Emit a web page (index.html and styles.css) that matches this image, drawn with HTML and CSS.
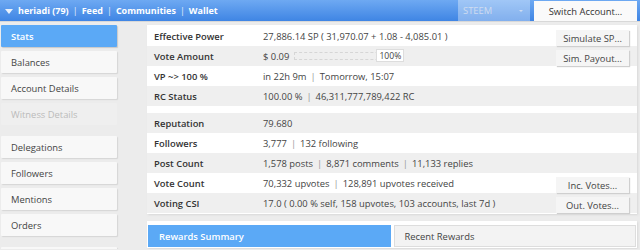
FILE: index.html
```html
<!DOCTYPE html>
<html>
<head>
<meta charset="utf-8">
<link rel="stylesheet" href="styles.css">
</head>
<body>
<div class="topbar">
  <div class="nav-links">
    <span class="caret"></span>
    <span class="link">heriadi (79)</span><span class="sep">|</span>
    <span class="link">Feed</span><span class="sep">|</span>
    <span class="link">Communities</span><span class="sep">|</span>
    <span class="link">Wallet</span>
  </div>
  <div class="top-right">
    <div class="chain-select"><span>STEEM</span><span class="chain-arrow"></span></div>
    <div class="switch-btn">Switch Account...</div>
  </div>
</div>
<div class="layout">
  <div class="sidenav">
    <div class="group">
      <div class="nav-item active">Stats</div>
      <div class="nav-item">Balances</div>
      <div class="nav-item">Account Details</div>
      <div class="nav-item disabled">Witness Details</div>
    </div>
    <div class="group">
      <div class="nav-item">Delegations</div>
      <div class="nav-item">Followers</div>
      <div class="nav-item">Mentions</div>
      <div class="nav-item">Orders</div>
    </div>
    <div class="group">
      <div class="nav-item"></div>
    </div>
  </div>
  <div class="main">
    <div class="card">
      <div class="table first">
        <div class="row">
          <div class="label">Effective Power</div>
          <div class="value">27,886.14 SP ( 31,970.07 + 1.08 - 4,085.01 )</div>
          <div class="btn">Simulate SP...</div>
        </div>
        <div class="row alt">
          <div class="label">Vote Amount</div>
          <div class="value vote">$ 0.09 <span class="slider"><span class="pct">100%</span></span></div>
          <div class="btn">Sim. Payout...</div>
        </div>
        <div class="row">
          <div class="label">VP ~&gt; 100 %</div>
          <div class="value">in 22h 9m <span class="bar">|</span> Tomorrow, 15:07</div>
        </div>
        <div class="row alt">
          <div class="label">RC Status</div>
          <div class="value">100.00 % <span class="bar">|</span> 46,311,777,789,422 RC</div>
        </div>
      </div>
      <div class="table second">
        <div class="row alt">
          <div class="label">Reputation</div>
          <div class="value">79.680</div>
        </div>
        <div class="row">
          <div class="label">Followers</div>
          <div class="value">3,777 <span class="bar">|</span> 132 following</div>
        </div>
        <div class="row alt">
          <div class="label">Post Count</div>
          <div class="value">1,578 posts <span class="bar">|</span> 8,871 comments <span class="bar">|</span> 11,133 replies</div>
        </div>
        <div class="row">
          <div class="label">Vote Count</div>
          <div class="value">70,332 upvotes <span class="bar">|</span> 128,891 upvotes received</div>
          <div class="btn">Inc. Votes...</div>
        </div>
        <div class="row alt">
          <div class="label">Voting CSI</div>
          <div class="value">17.0 ( 0.00 % self, 158 upvotes, 103 accounts, last 7d )</div>
          <div class="btn">Out. Votes...</div>
        </div>
      </div>
    </div>
    <div class="tabs">
      <div class="tab active">Rewards Summary</div>
      <div class="tab">Recent Rewards</div>
    </div>
  </div>
</div>
</body>
</html>
```

FILE: styles.css
```css
* { box-sizing: border-box; }
html, body { margin: 0; padding: 0; }
body {
  width: 640px;
  height: 250px;
  overflow: hidden;
  background: #ececec;
  font-family: "Open Sans", "Noto Sans", sans-serif;
  font-size: 9.4px;
  color: #333;
}
.topbar {
  height: 22px;
  display: flex;
  justify-content: space-between;
  align-items: stretch;
  background: linear-gradient(#6ea9f2, #3f85e4);
  border-bottom: 1px solid #d8d8d8;
}
.nav-links {
  display: flex;
  align-items: center;
  padding-left: 5px;
  color: #fff;
  font-weight: 700;
  font-size: 9px;
}
.caret {
  width: 0; height: 0;
  border-left: 4px solid transparent;
  border-right: 4px solid transparent;
  border-top: 5px solid #e8f0fb;
  margin: 1px 5px 0 0;
}
.sep { margin: 0 4px; font-weight: 400; color: #e2ecfa; }
.top-right { display: flex; align-items: stretch; padding-right: 3px; }
.chain-select {
  width: 72px;
  background: rgba(255,255,255,0.35);
  color: #cfdcf0;
  display: flex;
  align-items: center;
  justify-content: space-between;
  padding: 0 7px 0 5px;
}
.chain-arrow {
  width: 0; height: 0;
  border-left: 2px solid transparent;
  border-right: 2px solid transparent;
  border-top: 2px solid #cfdcf0;
}
.switch-btn {
  width: 103px;
  margin-left: 4px;
  margin-top: 1px;
  background: #fafafa;
  color: #333;
  display: flex;
  align-items: center;
  justify-content: center;
}
.layout {
  display: flex;
  gap: 30px;
  padding: 3px 3px 0 1px;
  height: 227px;
  overflow: hidden;
}
.sidenav { width: 116px; flex: none; display: flex; flex-direction: column; gap: 11px; }
.group { display: flex; flex-direction: column; gap: 4px; }
.nav-item {
  height: 22px;
  flex: none;
  background: #f8f8f8;
  box-shadow: 1px 1px 1px #d6d6d6;
  border-radius: 1px;
  padding-left: 10px;
  display: flex;
  align-items: center;
  color: #444;
}
.nav-item.active { background: #5ba9f6; color: #fff; font-weight: 600; box-shadow: 1px 1px 1px #c9c9c9; }
.nav-item.disabled { background: #efefef; color: #bbb; box-shadow: none; }
.main { flex: 1; display: flex; flex-direction: column; }
.card {
  background: #fff;
  box-shadow: 1px 1px 2px #d8d8d8;
  padding: 1px 0 1px 0;
}
.table.second { margin-top: 7px; }
.row {
  height: 20px;
  display: flex;
  align-items: center;
  background: #fff;
}
.row.alt { background: #efefef; }
.label { width: 116px; padding-left: 7px; font-weight: 600; color: #333; flex: none; }
.value { flex: 1; color: #444; white-space: nowrap; display: flex; align-items: center; }
.bar { color: #999; margin: 0 4px; }
.btn {
  width: 73px;
  height: 16px;
  margin-right: 8px;
  background: #f5f5f5;
  box-shadow: 1px 1px 1px #cfcfcf;
  display: flex;
  align-items: center;
  justify-content: center;
  color: #444;
  flex: none;
  position: relative;
  top: 2px;
}
.slider {
  width: 110px;
  height: 8px;
  margin-left: 5px;
  border: 1px dashed #d6d6d6;
  position: relative;
}
.pct {
  position: absolute;
  right: -1px;
  top: -4px;
  width: 28px;
  height: 13px;
  background: #fff;
  border: 1px solid #ddd;
  font-size: 8.6px;
  display: flex;
  align-items: center;
  justify-content: center;
}
.tabs {
  margin-top: 7px;
  background: #fff;
  padding: 4px 1px 1px 1px;
  display: flex;
  gap: 3px;
  box-shadow: 1px 1px 2px #d8d8d8;
  flex: none;
}
.tab {
  flex: 1;
  height: 22px;
  display: flex;
  align-items: center;
  padding-left: 10px;
  background: #f3f3f3;
  border: 1px solid #ddd;
  color: #444;
}
.tab.active { background: #5ba9f6; border-color: #5ba9f6; color: #fff; font-weight: 600; }
```
